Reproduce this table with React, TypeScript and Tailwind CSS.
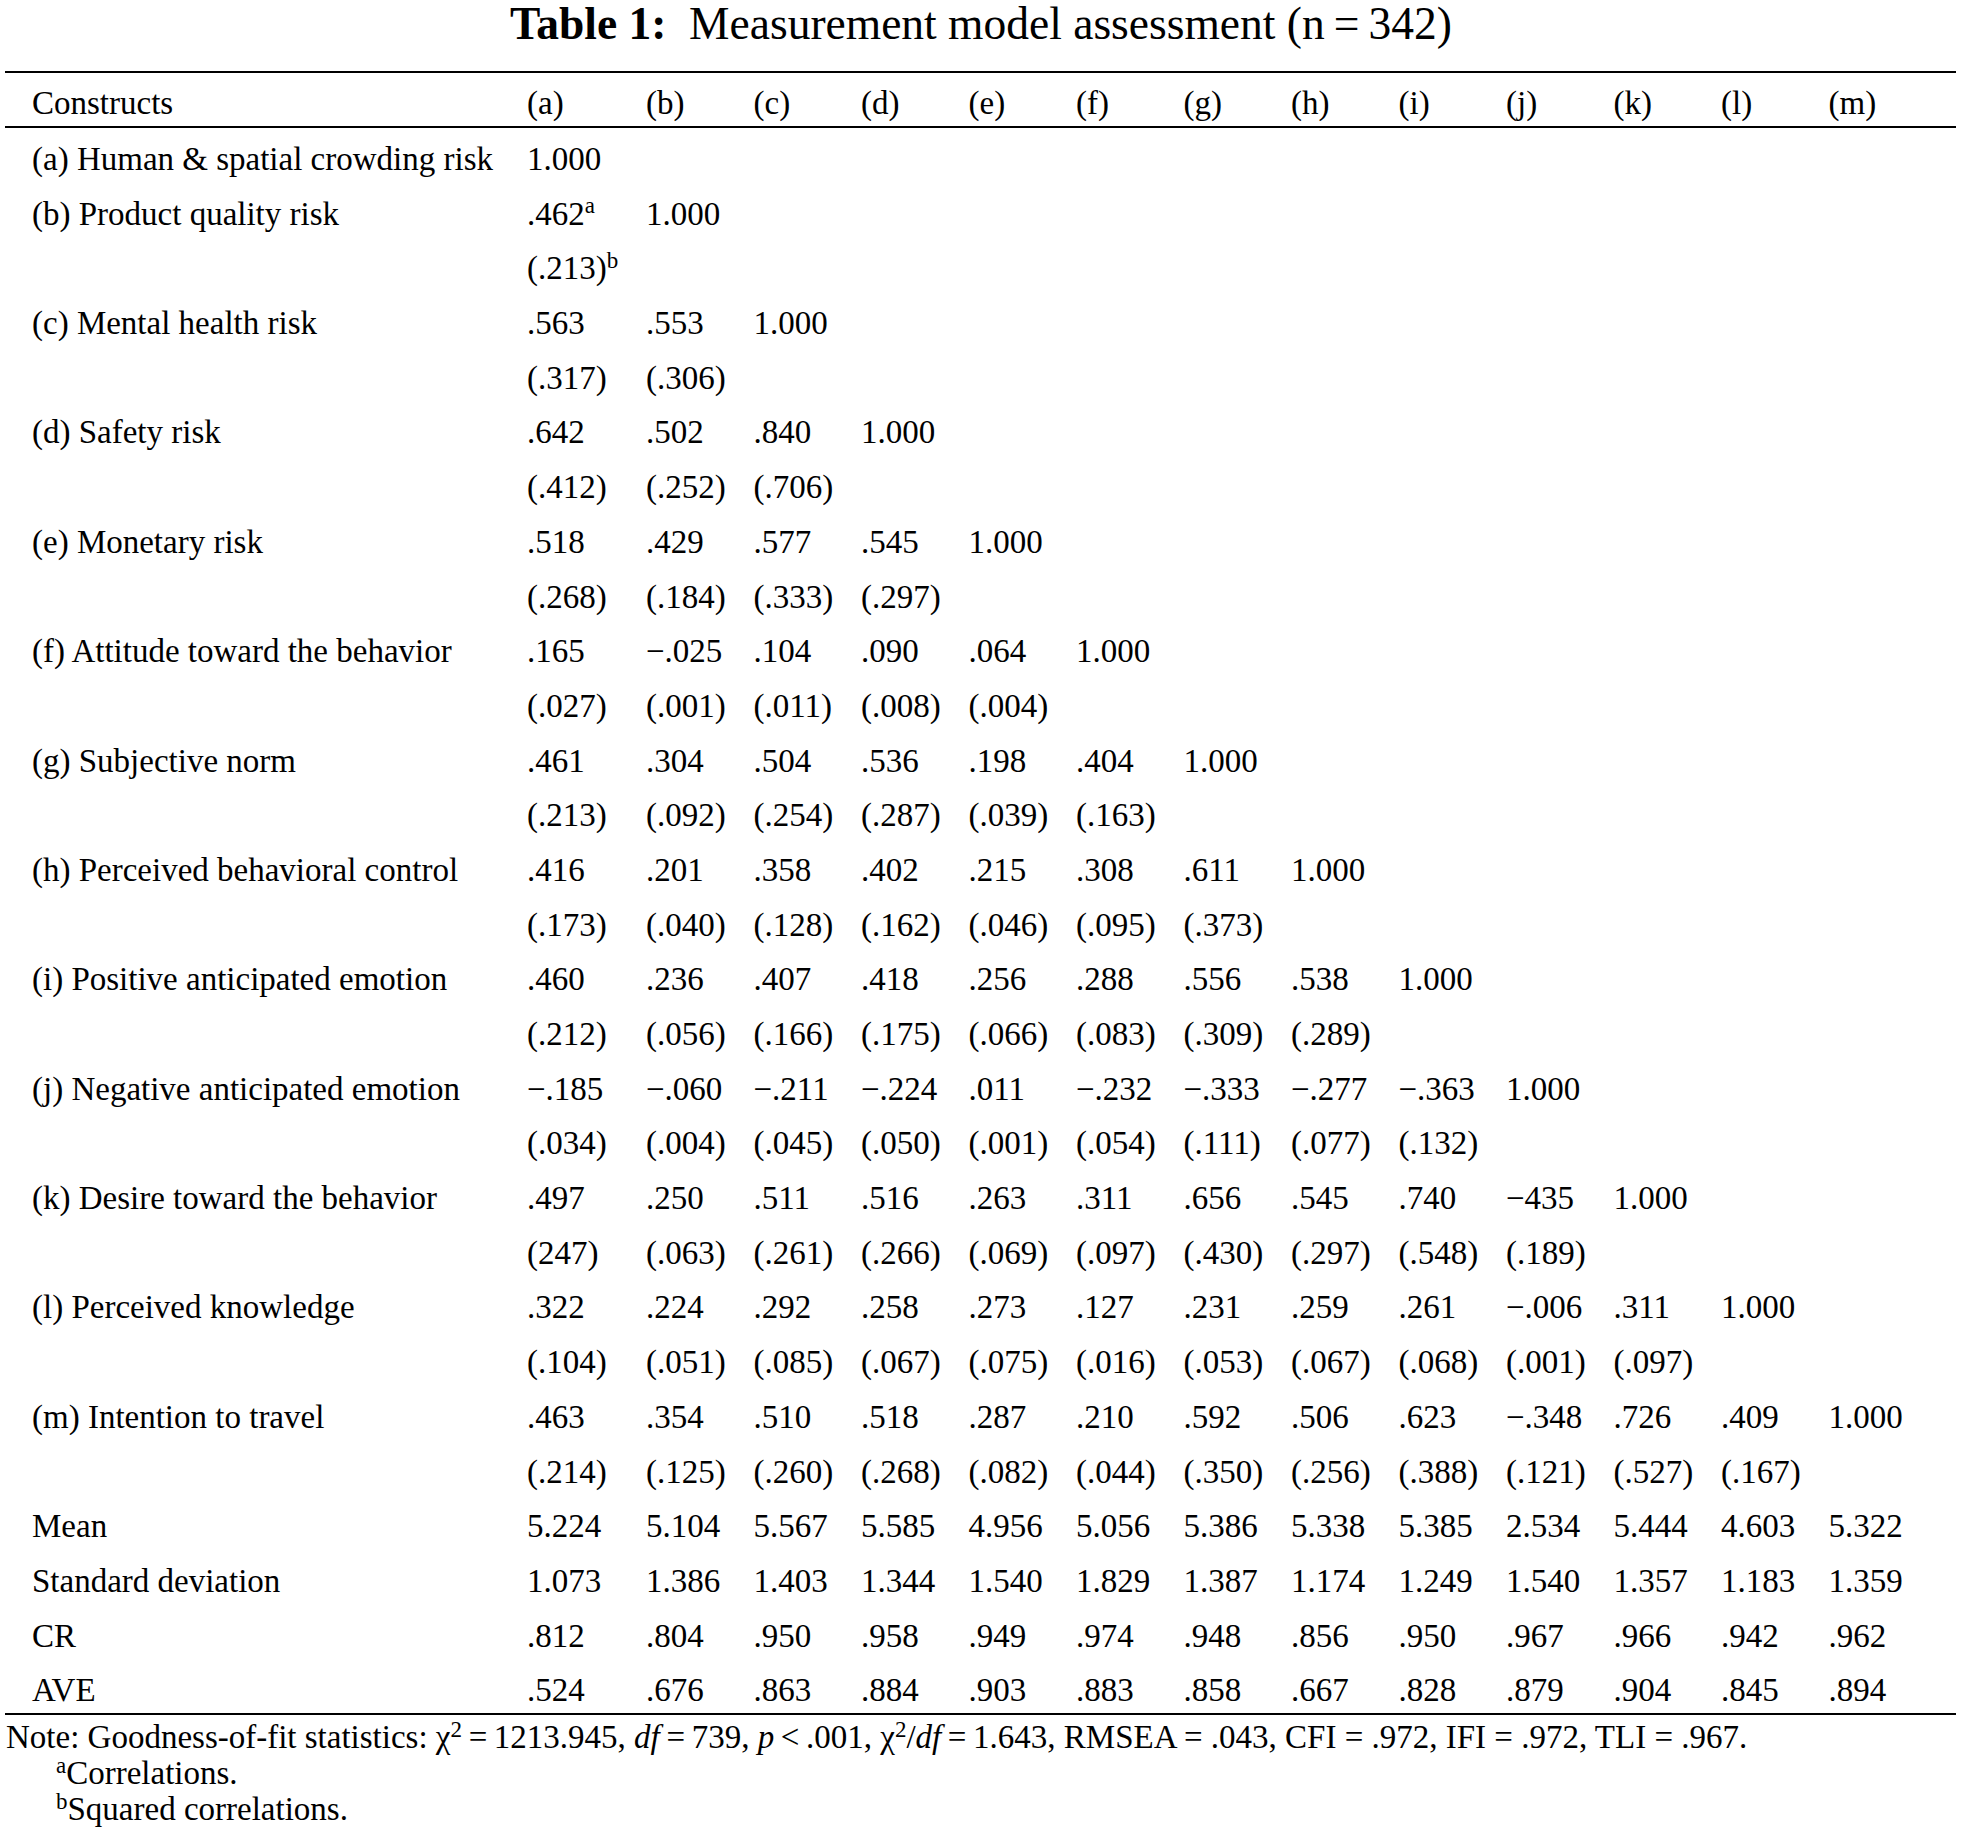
import React from "react";

type Cell = string | { v: string; sup: string };

const labels: { label: string; r: Cell[]; s: Cell[] | null }[] = [
  { label: "(a) Human & spatial crowding risk", r: ["1.000"], s: null },
  { label: "(b) Product quality risk", r: [{ v: ".462", sup: "a" }, "1.000"], s: [{ v: "(.213)", sup: "b" }] },
  { label: "(c) Mental health risk", r: [".563", ".553", "1.000"], s: ["(.317)", "(.306)"] },
  { label: "(d) Safety risk", r: [".642", ".502", ".840", "1.000"], s: ["(.412)", "(.252)", "(.706)"] },
  { label: "(e) Monetary risk", r: [".518", ".429", ".577", ".545", "1.000"], s: ["(.268)", "(.184)", "(.333)", "(.297)"] },
  {
    label: "(f) Attitude toward the behavior",
    r: [".165", "\u2212.025", ".104", ".090", ".064", "1.000"],
    s: ["(.027)", "(.001)", "(.011)", "(.008)", "(.004)"],
  },
  {
    label: "(g) Subjective norm",
    r: [".461", ".304", ".504", ".536", ".198", ".404", "1.000"],
    s: ["(.213)", "(.092)", "(.254)", "(.287)", "(.039)", "(.163)"],
  },
  {
    label: "(h) Perceived behavioral control",
    r: [".416", ".201", ".358", ".402", ".215", ".308", ".611", "1.000"],
    s: ["(.173)", "(.040)", "(.128)", "(.162)", "(.046)", "(.095)", "(.373)"],
  },
  {
    label: "(i) Positive anticipated emotion",
    r: [".460", ".236", ".407", ".418", ".256", ".288", ".556", ".538", "1.000"],
    s: ["(.212)", "(.056)", "(.166)", "(.175)", "(.066)", "(.083)", "(.309)", "(.289)"],
  },
  {
    label: "(j) Negative anticipated emotion",
    r: ["\u2212.185", "\u2212.060", "\u2212.211", "\u2212.224", ".011", "\u2212.232", "\u2212.333", "\u2212.277", "\u2212.363", "1.000"],
    s: ["(.034)", "(.004)", "(.045)", "(.050)", "(.001)", "(.054)", "(.111)", "(.077)", "(.132)"],
  },
  {
    label: "(k) Desire toward the behavior",
    r: [".497", ".250", ".511", ".516", ".263", ".311", ".656", ".545", ".740", "\u2212435", "1.000"],
    s: ["(247)", "(.063)", "(.261)", "(.266)", "(.069)", "(.097)", "(.430)", "(.297)", "(.548)", "(.189)"],
  },
  {
    label: "(l) Perceived knowledge",
    r: [".322", ".224", ".292", ".258", ".273", ".127", ".231", ".259", ".261", "\u2212.006", ".311", "1.000"],
    s: ["(.104)", "(.051)", "(.085)", "(.067)", "(.075)", "(.016)", "(.053)", "(.067)", "(.068)", "(.001)", "(.097)"],
  },
  {
    label: "(m) Intention to travel",
    r: [".463", ".354", ".510", ".518", ".287", ".210", ".592", ".506", ".623", "\u2212.348", ".726", ".409", "1.000"],
    s: ["(.214)", "(.125)", "(.260)", "(.268)", "(.082)", "(.044)", "(.350)", "(.256)", "(.388)", "(.121)", "(.527)", "(.167)"],
  },
];

const stats: { label: string; r: string[] }[] = [
  { label: "Mean", r: ["5.224", "5.104", "5.567", "5.585", "4.956", "5.056", "5.386", "5.338", "5.385", "2.534", "5.444", "4.603", "5.322"] },
  {
    label: "Standard deviation",
    r: ["1.073", "1.386", "1.403", "1.344", "1.540", "1.829", "1.387", "1.174", "1.249", "1.540", "1.357", "1.183", "1.359"],
  },
  { label: "CR", r: [".812", ".804", ".950", ".958", ".949", ".974", ".948", ".856", ".950", ".967", ".966", ".942", ".962"] },
  { label: "AVE", r: [".524", ".676", ".863", ".884", ".903", ".883", ".858", ".667", ".828", ".879", ".904", ".845", ".894"] },
];

const heads = ["(a)", "(b)", "(c)", "(d)", "(e)", "(f)", "(g)", "(h)", "(i)", "(j)", "(k)", "(l)", "(m)"];

const gridCls =
  "grid grid-cols-[522px_119px_107.5px_107.5px_107.5px_107.5px_107.5px_107.5px_107.5px_107.5px_107.5px_107.5px_107.5px_1fr] whitespace-nowrap";

function CellView({ c }: { c: Cell }) {
  if (typeof c === "string") return <div>{c}</div>;
  return (
    <div>
      {c.v}
      <sup className="text-[23px]">{c.sup}</sup>
    </div>
  );
}

function Line({ label, cells }: { label: string; cells: Cell[] }) {
  return (
    <div className={`${gridCls} h-[46px] leading-[46px]`}>
      <div className="pl-[27px]">{label}</div>
      {cells.map((c, i) => (
        <CellView key={i} c={c} />
      ))}
    </div>
  );
}

export default function App() {
  return (
    <div className="w-[1962px] min-h-[1834px] bg-white text-black font-['Liberation_Serif','Times_New_Roman',serif]">
      <div className="h-[46px] pt-[2px] text-center text-[45.5px] leading-[44px] whitespace-nowrap">
        <span className="font-bold">Table 1:</span>
        {"\u00a0\u00a0"}Measurement model assessment (n{"\u2009"}={"\u2009"}342)
      </div>

      <div className="ml-[5px] w-[1951px] mt-[25px] text-[33px]">
        <div className="h-[2px] bg-black" />
        <div className={`${gridCls} h-[53px] pt-[7px] leading-[46px]`}>
          <div className="pl-[27px]">Constructs</div>
          {heads.map((h) => (
            <div key={h}>{h}</div>
          ))}
        </div>
        <div className="h-[2px] bg-black" />
        <div className="flex flex-col gap-[8.7px] pt-[8px]">
          {labels.map((row) => (
            <React.Fragment key={row.label}>
              <Line label={row.label} cells={row.r} />
              {row.s && <Line label="" cells={row.s} />}
            </React.Fragment>
          ))}
          {stats.map((row) => (
            <Line key={row.label} label={row.label} cells={row.r} />
          ))}
        </div>
        <div className="h-[2px] bg-black" />
      </div>

      <div className="pl-[6px] pt-[4px] text-[33px] leading-[36px] whitespace-nowrap">
        <div>
          Note: Goodness-of-fit statistics: χ<sup className="text-[23px]">2</sup>
          {"\u2009"}={"\u2009"}1213.945, <i>df</i>
          {"\u2009"}={"\u2009"}739, <i>p</i>
          {"\u2009"}&lt;{"\u2009"}.001, χ<sup className="text-[23px]">2</sup>/<i>df</i>
          {"\u2009"}={"\u2009"}1.643, RMSEA = .043, CFI = .972, IFI = .972, TLI = .967.
        </div>
        <div className="pl-[50px]">
          <sup className="text-[23px]">a</sup>Correlations.
        </div>
        <div className="pl-[50px]">
          <sup className="text-[23px]">b</sup>Squared correlations.
        </div>
      </div>
    </div>
  );
}
